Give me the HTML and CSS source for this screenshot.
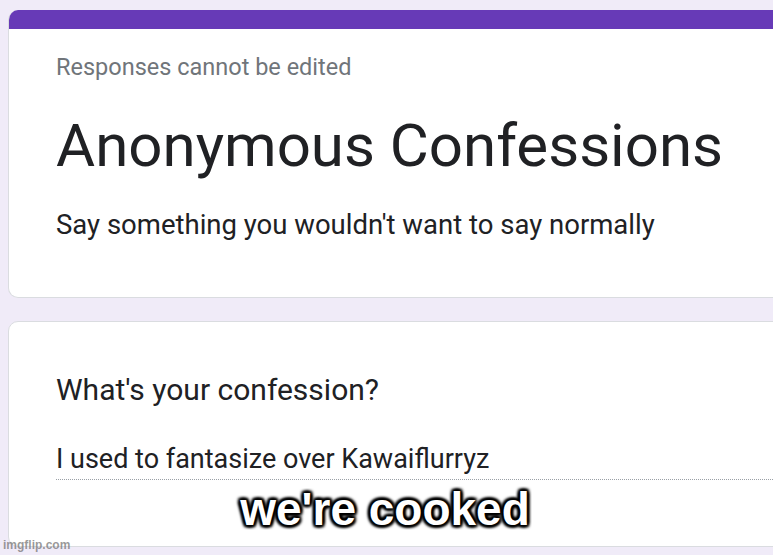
FILE: index.html
```html
<!DOCTYPE html>
<html>
<head>
<meta charset="utf-8">
<link rel="stylesheet" href="styles.css">
</head>
<body>
<main class="page">
  <section class="card header-card">
    <div class="accent"></div>
    <div class="header-body">
      <p class="note">Responses cannot be edited</p>
      <h1 class="title">Anonymous Confessions</h1>
      <p class="desc">Say something you wouldn't want to say normally</p>
    </div>
  </section>
  <section class="card question-card">
    <h2 class="question">What's your confession?</h2>
    <div class="answer">I used to fantasize over Kawaiflurryz</div>
  </section>
</main>
<div class="caption">we're cooked</div>
<div class="watermark">imgflip.com</div>
</body>
</html>
```

FILE: styles.css
```css
html, body {
  margin: 0;
  padding: 0;
}
body {
  width: 773px;
  height: 555px;
  overflow: hidden;
  background: #f0ebf8;
  position: relative;
  font-family: Roboto, "Liberation Sans", sans-serif;
  color: #202124;
}
.page {
  display: flex;
  flex-direction: column;
  gap: 23px;
  padding: 10px 0 0 8px;
}
.card {
  width: 820px;
  background: #fff;
  border: 1px solid #dadce0;
  border-radius: 10px;
  box-sizing: border-box;
}
.header-card {
  height: 288px;
  border-top: none;
  overflow: hidden;
}
.accent {
  height: 19px;
  background: #673ab7;
}
.header-body {
  padding: 24px 0 0 47px;
}
.note {
  margin: 0;
  font-size: 23.5px;
  line-height: 28px;
  color: #70757a;
}
.title {
  margin: 29px 0 0;
  font-weight: 400;
  font-size: 60px;
  line-height: 72px;
  letter-spacing: 0;
}
.desc {
  margin: 26px 0 0;
  font-size: 27.5px;
  line-height: 34px;
}
.question-card {
  height: 226px;
  padding: 50px 0 0 47px;
}
.question {
  margin: 0;
  font-weight: 400;
  font-size: 30px;
  line-height: 36px;
}
.answer {
  margin-top: 35px;
  font-size: 27px;
  line-height: 32px;
  padding-bottom: 4px;
  border-bottom: 1px dotted #9aa0a6;
}
.caption {
  position: absolute;
  left: 0;
  right: 0;
  top: 483px;
  text-align: center;
  font-family: "Liberation Sans", Arial, sans-serif;
  font-weight: bold;
  font-size: 46px;
  line-height: 52px;
  color: #fff;
  text-indent: -3px;
  text-shadow:
    2px 2px 3px #000, -2px -2px 3px #000, 2px -2px 3px #000, -2px 2px 3px #000,
    0 2px 3px #000, 0 -2px 3px #000, 2px 0 3px #000, -2px 0 3px #000;
}
.watermark {
  position: absolute;
  left: 3px;
  bottom: 3px;
  font-family: "Liberation Sans", Arial, sans-serif;
  font-weight: bold;
  font-size: 12px;
  line-height: 14px;
  color: rgba(120, 120, 120, 0.75);
}
```
